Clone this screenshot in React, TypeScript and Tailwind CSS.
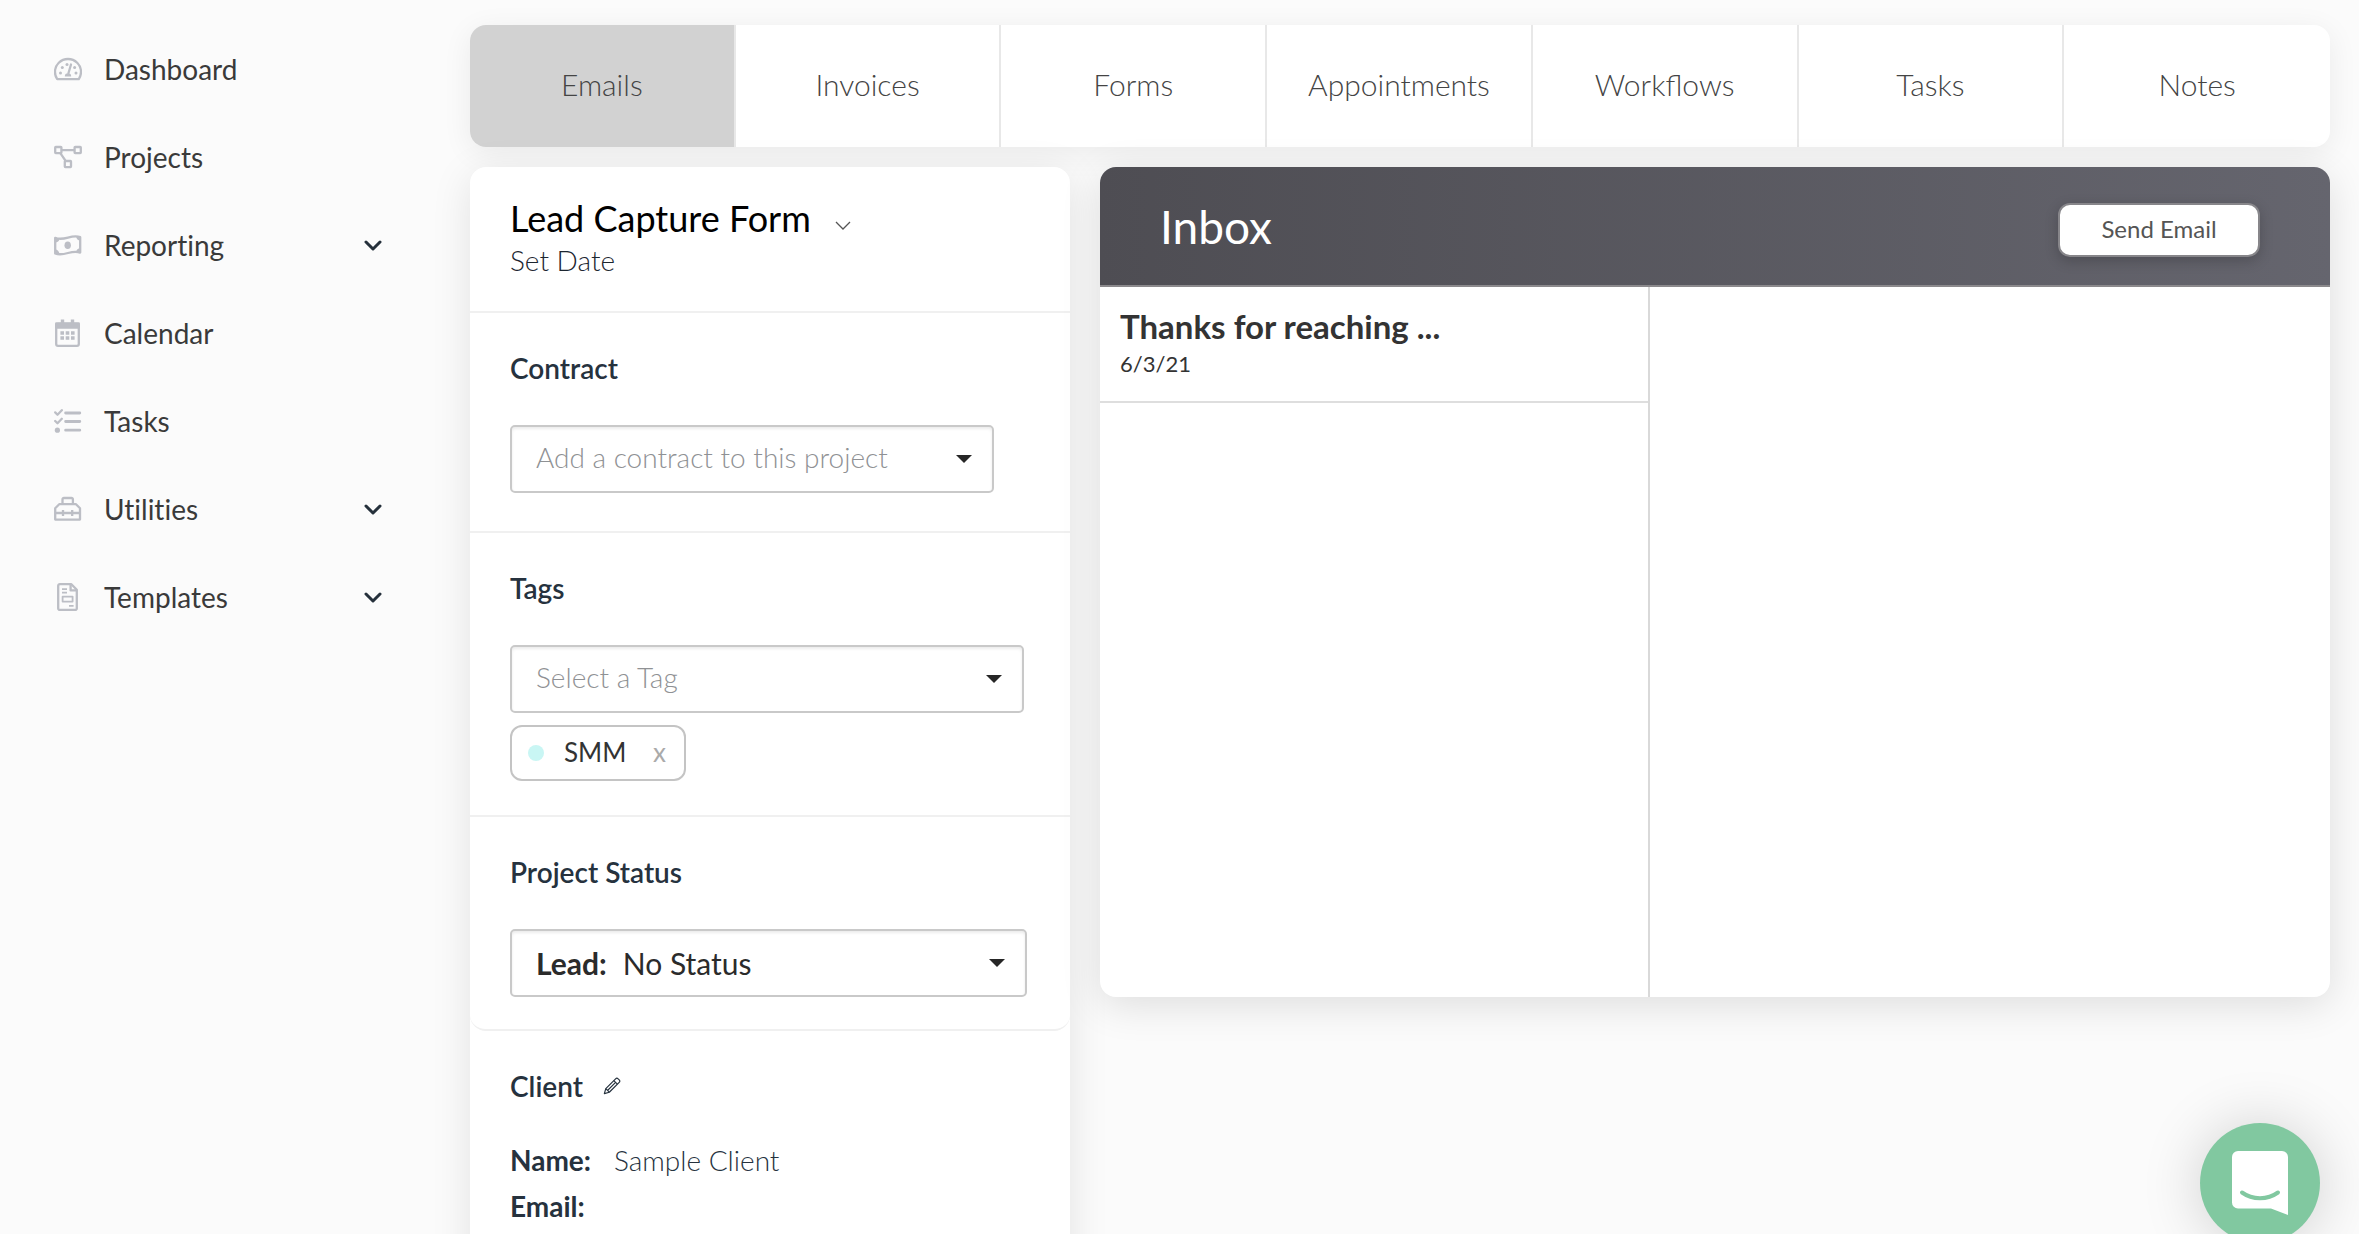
import type { ReactNode } from "react";

const iconProps = {
  viewBox: "0 0 28 28",
  className: "size-7 shrink-0 text-[#bcbec5]",
  fill: "none",
  stroke: "currentColor",
  strokeWidth: 2.3,
  strokeLinejoin: "round" as const,
  "aria-hidden": true,
};

const icons: Record<string, ReactNode> = {
  dashboard: (
    <svg {...iconProps}>
      <path d="M3.200 24.200h21.600a12.800 12.800 0 0 0 2.200-7.200a13 13 0 0 0-26 0c0 2.600.8 5.200 2.200 7.200z" />
      <path d="M17 9.500L14.500 18" strokeLinecap="round" />
      <path d="M10.800 21.500a3.200 3.200 0 1 1 6.400 0z" fill="currentColor" stroke="none" />
      <g fill="currentColor" stroke="none">
        <circle cx="13" cy="9.500" r="1.500" />
        <circle cx="8.300" cy="12.500" r="1.500" />
        <circle cx="6.500" cy="18" r="1.500" />
        <circle cx="20.600" cy="12.500" r="1.500" />
        <circle cx="22" cy="18" r="1.500" />
      </g>
    </svg>
  ),
  projects: (
    <svg {...iconProps}>
      <rect x="1.200" y="4" width="6.200" height="6.200" rx=".6" />
      <rect x="20.600" y="4" width="6.200" height="6.200" rx=".6" />
      <rect x="10.800" y="18" width="6.200" height="6.200" rx=".6" />
      <path d="M7.400 7.200h13.200M6.500 10.400l5.300 7.800" />
    </svg>
  ),
  reporting: (
    <svg {...iconProps}>
      <path d="M1.200 6.800c4 1.800 8.200 1 12.800-.2s8.400-1.800 12.200-.4V21.600c-4.200-1.600-7.800-.8-12.200.4s-8.800 2-12.800.4z" />
      <path
        d="M1 7v4.500a4.500 4.500 0 0 0 4.500-3.800zM1 22.500v-4.300a4.500 4.500 0 0 1 4.200 4.800zM26.400 6v3.600a4 4 0 0 1-4.200-4zM26.400 21.600v-4.400a4.500 4.500 0 0 0-4.300 3.700z"
        fill="currentColor"
        stroke="none"
      />
      <ellipse cx="13.700" cy="14.300" rx="3.200" ry="3.800" fill="currentColor" stroke="none" />
    </svg>
  ),
  calendar: (
    <svg {...iconProps}>
      <rect x="2.200" y="4.800" width="22.600" height="22" rx="1.800" />
      <path d="M2.200 4.500h22.600v4H2.200z" fill="currentColor" />
      <path d="M8.500 5V.4M18.500 5V.4" strokeWidth="3.400" />
      <path
        d="M6.400 14h3.600M11.700 14h3.600M17 14h3.600M6.400 19h3.600M11.700 19h3.600M17 19h3.600"
        strokeWidth="3.400"
      />
    </svg>
  ),
  tasks: (
    <svg {...iconProps} strokeLinecap="round">
      <path d="M1.200 5.400l2.300 2.300 4.300-4.500M1.200 14l2.300 2.300 4.300-4.500" strokeWidth="2.300" />
      <path d="M11.600 6h14.200M11.600 14.500h14.200M11.600 23.200h14.200" strokeWidth="2.800" />
      <circle cx="3.400" cy="23.200" r="2.600" fill="currentColor" stroke="none" />
    </svg>
  ),
  utilities: (
    <svg {...iconProps}>
      <path d="M1.200 24.600v-11.400l4-4h16.800l4 4v11.400z" />
      <path d="M8.500 9V4.400a1.400 1.400 0 0 1 1.400-1.400h7.600a1.400 1.400 0 0 1 1.400 1.400V9" />
      <path d="M1.200 18h24.800M9 15v6M18.200 15v6" />
    </svg>
  ),
  templates: (
    <svg {...iconProps}>
      <path d="M17.400 1.200H5.800a1.600 1.600 0 0 0-1.600 1.600v22.600a1.600 1.600 0 0 0 1.600 1.600h15.400a1.600 1.600 0 0 0 1.600-1.600V6.800z" />
      <path d="M16.600 1.200v6.200h6.200" />
      <path d="M8 6.200h5M8 9.600h5M15 22.800h4.600" strokeWidth="1.800" />
      <rect x="8.600" y="13.600" width="10" height="5" strokeWidth="1.800" />
    </svg>
  ),
};

const navItems = [
  { icon: "dashboard", label: "Dashboard" },
  { icon: "projects", label: "Projects" },
  { icon: "reporting", label: "Reporting", expandable: true },
  { icon: "calendar", label: "Calendar" },
  { icon: "tasks", label: "Tasks" },
  { icon: "utilities", label: "Utilities", expandable: true },
  { icon: "templates", label: "Templates", expandable: true },
];

const tabs = ["Emails", "Invoices", "Forms", "Appointments", "Workflows", "Tasks", "Notes"];

function Sidebar() {
  return (
    <nav className="w-[470px] shrink-0 pt-[25px] pl-[54px] pr-[88px] [font-variant-ligatures:none]">
      <ul>
        {navItems.map(({ icon, label, expandable }) => (
          <li key={label}>
            <a href="#" className="flex h-[88px] items-center text-[28px] text-[#3a3a3a]">
              {icons[icon]}
              <span className="ml-[22px] flex-1">{label}</span>
              {expandable && (
                <svg viewBox="0 0 18 14" className="h-3.5 w-[18px]" aria-hidden>
                  <path
                    d="M2 4l7 7 7-7"
                    fill="none"
                    stroke="#25303b"
                    strokeWidth="3"
                    strokeLinecap="round"
                    strokeLinejoin="round"
                  />
                </svg>
              )}
            </a>
          </li>
        ))}
      </ul>
    </nav>
  );
}

function Tabs() {
  return (
    <div
      role="tablist"
      className="grid grid-cols-7 divide-x-2 divide-[#e8e8e8] overflow-hidden rounded-2xl bg-white shadow-[0_6px_30px_rgba(0,0,0,0.07)]"
    >
      {tabs.map((tab, index) => (
        <button
          key={tab}
          role="tab"
          aria-selected={index === 0}
          className={
            index === 0
              ? "h-[122px] bg-[#d2d2d2] pb-1 text-[30px] font-light text-[#444]"
              : "h-[122px] pb-1 text-[30px] font-light text-[#444]"
          }
        >
          {tab}
        </button>
      ))}
    </div>
  );
}

type SelectBoxProps = {
  id: string;
  value: string;
  prefix?: string;
  boxClass: string;
  textClass: string;
};

function SelectBox({ id, value, prefix, boxClass, textClass }: SelectBoxProps) {
  return (
    <div
      className={`relative flex h-[68px] items-center rounded-[5px] border-2 border-[#c9c9c9] bg-white pl-6 shadow-[inset_0_2px_3px_rgba(0,0,0,0.08)] ${boxClass}`}
    >
      {prefix && <span className="mr-4 font-bold text-[#2b2b2b]">{prefix}</span>}
      <select
        id={id}
        className={`h-full flex-1 appearance-none bg-transparent pr-14 outline-none ${textClass}`}
      >
        <option>{value}</option>
      </select>
      <svg
        viewBox="0 0 16 8"
        className="pointer-events-none absolute right-5 h-2 w-4"
        aria-hidden
      >
        <path d="M0 0h16L8 8z" fill="#262626" />
      </svg>
    </div>
  );
}

function ProjectCard() {
  return (
    <section className="w-[600px] shrink-0 self-start rounded-2xl bg-white pb-20 text-[28px] shadow-[0_8px_40px_rgba(0,0,0,0.1)]">
      <header className="h-[146px] border-b-2 border-[#f0f0f0] px-10 pt-[30px]">
        <div className="flex items-center">
          <h1 className="text-[36px] leading-[42px] text-black">Lead Capture Form</h1>
          <button aria-label="Project options" className="ml-6 pt-4">
            <svg viewBox="0 0 16 10" className="h-2.5 w-4" aria-hidden>
              <path d="M1 1l7 7 7-7" fill="none" stroke="#555" strokeWidth="1.300" />
            </svg>
          </button>
        </div>
        <p className="leading-[42px] font-light text-[#1c2630]">Set Date</p>
      </header>

      <div className="border-b-2 border-[#f0f0f0] px-10 pt-[38px] pb-[38px]">
        <label htmlFor="contract" className="mb-10 block leading-[34px] font-semibold text-[#26323e]">
          Contract
        </label>
        <SelectBox
          id="contract"
          value="Add a contract to this project"
          boxClass="mr-9"
          textClass="pb-1 font-light text-[#8f9194]"
        />
      </div>

      <div className="border-b-2 border-[#f0f0f0] px-10 pt-[38px] pb-[34px]">
        <label htmlFor="tags" className="mb-10 block leading-[34px] font-semibold text-[#26323e]">
          Tags
        </label>
        <SelectBox
          id="tags"
          value="Select a Tag"
          boxClass="mr-1.5"
          textClass="pb-1 font-light text-[#8f9194]"
        />
        <div className="mt-3 inline-flex h-14 items-center rounded-xl border-2 border-[#c4c4c4] px-4 align-top text-[26px]">
          <span className="size-4 rounded-full bg-[#c9f6f4]" />
          <span className="ml-5 pb-0.5 text-[#333]">SMM</span>
          <button aria-label="Remove SMM" className="ml-6 w-[18px] pb-0.5 text-[#aaa]">
            x
          </button>
        </div>
      </div>

      <div className="rounded-b-2xl border-b-2 border-[#f0f0f0] px-10 pt-[38px] pb-8">
        <label htmlFor="status" className="mb-10 block leading-[34px] font-semibold text-[#26323e]">
          Project Status
        </label>
        <SelectBox
          id="status"
          value="No Status"
          prefix="Lead:"
          boxClass="mr-[3px] text-[30px]"
          textClass="text-[#2b2b2b]"
        />
      </div>

      <div className="px-10 pt-[38px] text-[#26323e]">
        <div className="flex items-center gap-5">
          <h2 className="leading-[34px] font-semibold">Client</h2>
          <button aria-label="Edit client">
            <svg
              viewBox="0 0 20 20"
              className="size-[18px]"
              fill="none"
              stroke="#26323e"
              strokeWidth="1.300"
              strokeLinejoin="round"
              aria-hidden
            >
              <path d="M1.500 18.500l1.600-5.500L14 2a2 2 0 0 1 2.800 0l1.200 1.200a2 2 0 0 1 0 2.800L7 16.900z" />
              <path d="M12 4l4 4M3.100 13l3.900 3.900M14 6L5 15" />
            </svg>
          </button>
        </div>
        <dl className="mt-[34px] grid grid-cols-[104px_1fr] leading-[46px]">
          <dt className="font-bold">Name:</dt>
          <dd className="font-light">Sample Client</dd>
          <dt className="font-bold">Email:</dt>
          <dd />
        </dl>
      </div>
    </section>
  );
}

function Inbox() {
  return (
    <section className="min-w-0 flex-1 self-start overflow-hidden rounded-2xl bg-white shadow-[0_8px_40px_rgba(0,0,0,0.12)]">
      <header className="flex h-[120px] items-start justify-between border-b-2 border-[#8b898c] bg-linear-to-r from-[#4e4d53] to-[#65656e] pt-9 pr-[70px] pl-[60px]">
        <h2 className="text-[46px] leading-[48px] text-white">Inbox</h2>
        <button className="h-[54px] w-[202px] rounded-xl border-2 border-[#87868a] bg-white pb-0.5 text-[24px] text-[#555] shadow-[0_4px_14px_rgba(0,0,0,0.2)]">
          Send Email
        </button>
      </header>
      <div className="flex min-h-[710px]">
        <ul className="w-[550px] border-r-2 border-[#d9d9d9]">
          <li className="border-b-2 border-[#dedede] text-[#333]">
            <a href="#" className="block h-[114px] px-5 pt-5">
              <span className="block text-[33px] leading-[38px] font-bold">Thanks for reaching ...</span>
              <span className="block text-[22px] leading-[38px]">6/3/21</span>
            </a>
          </li>
        </ul>
        <div className="flex-1" />
      </div>
    </section>
  );
}

function ChatLauncher() {
  return (
    <button
      aria-label="Open chat"
      className="fixed right-[39px] -bottom-[9px] flex size-[120px] items-center justify-center rounded-full bg-[#81c8a0] shadow-[0_2px_60px_rgba(0,0,0,0.18)]"
    >
      <svg viewBox="0 0 56 64" className="h-16 w-14" aria-hidden>
        <path
          d="M6 0h44a6 6 0 0 1 6 6v58l-17-6.500H6a6 6 0 0 1-6-6V6a6 6 0 0 1 6-6z"
          fill="#fff"
        />
        <path
          d="M10 41.500c10.500 7.500 25.500 7.500 36 0"
          fill="none"
          stroke="#81c8a0"
          strokeWidth="4"
          strokeLinecap="round"
        />
      </svg>
    </button>
  );
}

export default function App() {
  return (
    <div className="flex h-dvh overflow-hidden bg-[#fbfbfb] font-['Lato',sans-serif]">
      <Sidebar />
      <main className="min-w-0 flex-1 pt-[25px] pr-[29px]">
        <Tabs />
        <div className="mt-5 flex gap-[30px]">
          <ProjectCard />
          <Inbox />
        </div>
      </main>
      <ChatLauncher />
    </div>
  );
}
